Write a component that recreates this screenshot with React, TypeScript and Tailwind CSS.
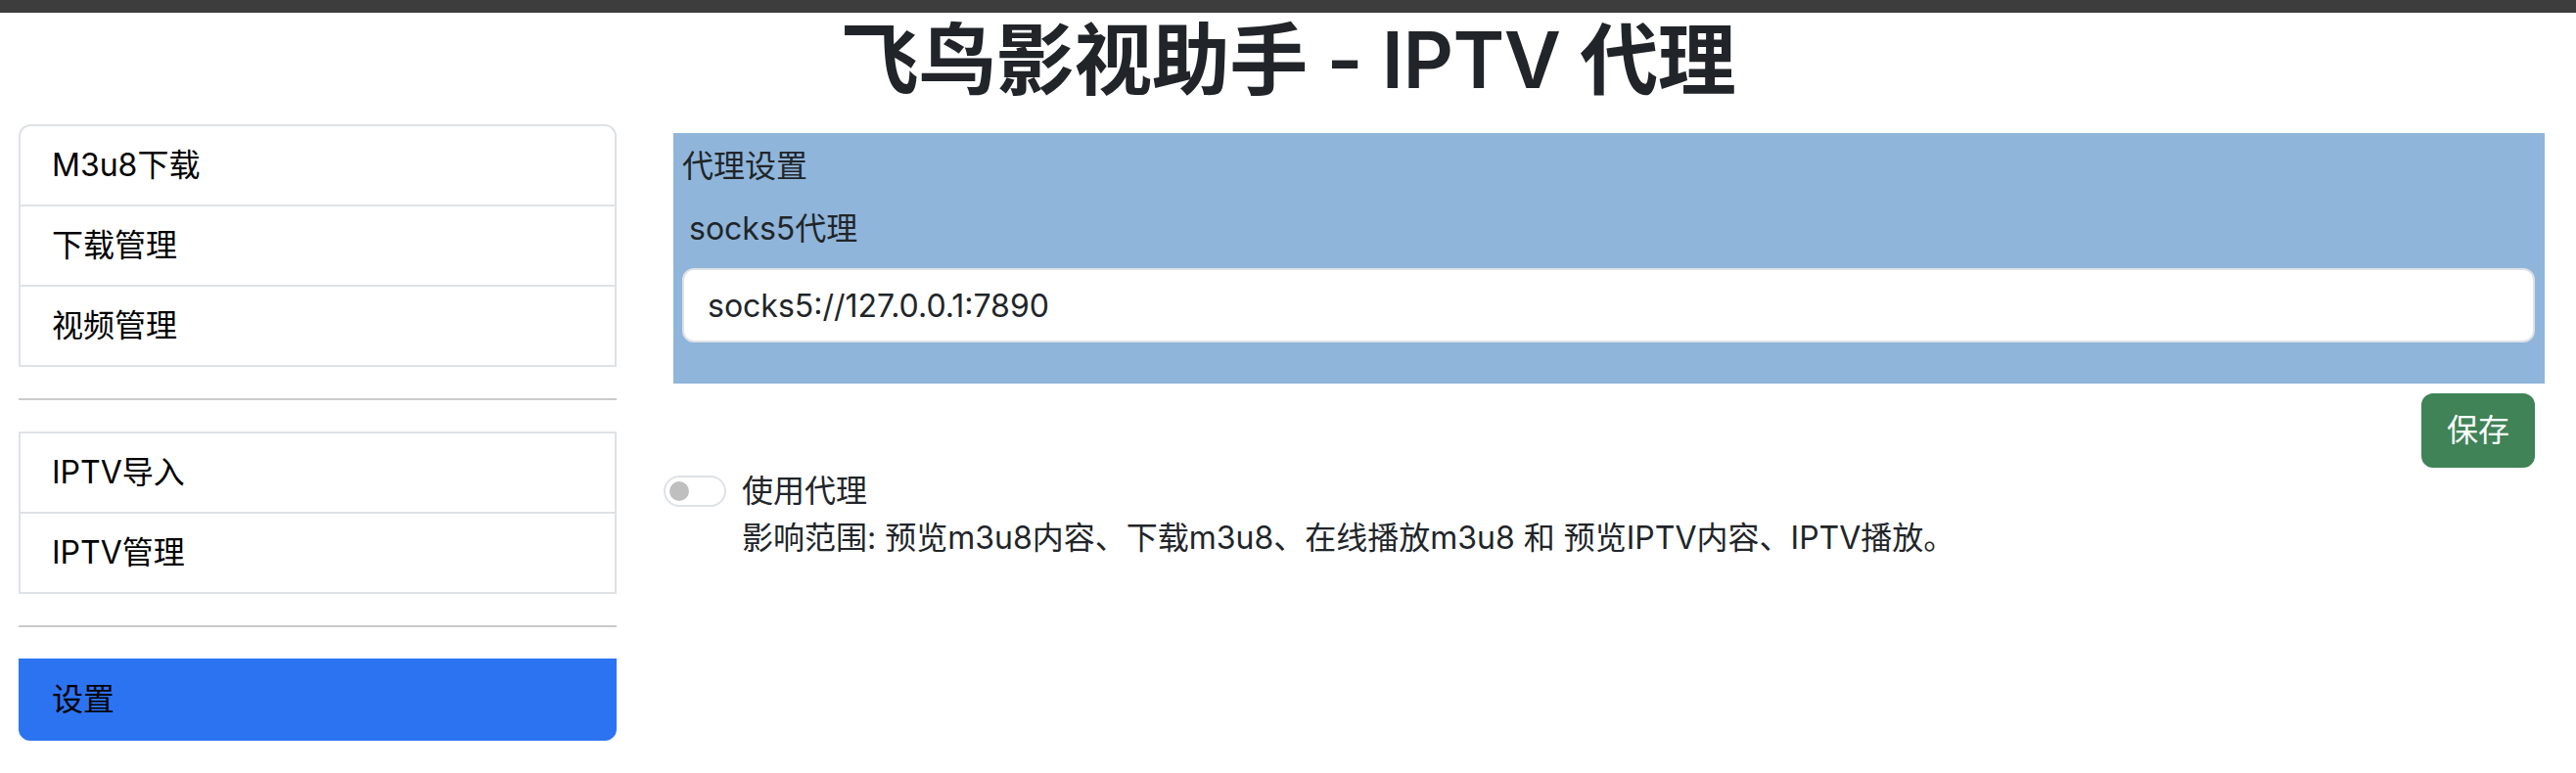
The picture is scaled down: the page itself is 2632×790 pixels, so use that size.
import { useState } from 'react';

const groups = [
  ['M3u8下载', '下载管理', '视频管理'],
  ['IPTV导入', 'IPTV管理'],
];

export default function App() {
  const [useProxy, setUseProxy] = useState(false);

  return (
    <div className="min-h-screen bg-white font-['Inter','Noto_Sans_CJK_SC',sans-serif] text-[#212529]">
      {/* window strip */}
      <div className="h-[13px] bg-[#3d3d3d]" />

      <h1 className="text-center text-[80px] font-semibold leading-[96px] tracking-[-0.5px] text-[#212529]">
        飞鸟影视助手 - IPTV 代理
      </h1>

      <div className="mt-[18px] flex pl-[19px]">
        {/* Sidebar */}
        <aside className="w-[611px] shrink-0 text-[32px] leading-[48px] text-black">
          {groups.map((items, gi) => (
            <div key={gi}>
              {items.map((item, i) => (
                <div
                  key={item}
                  className={`border-2 border-[#dee2e6] px-[32px] py-[16px] ${i > 0 ? 'border-t-0' : ''} ${gi === 0 && i === 0 ? 'rounded-t-[12px]' : ''}`}
                >
                  {item}
                </div>
              ))}
              <div className="my-[32px] h-[2px] bg-[#c9cacb]" />
            </div>
          ))}
          <div className="rounded-b-[12px] border-2 border-[#2c73f1] bg-[#2c73f1] px-[32px] py-[16px]">
            设置
          </div>
        </aside>

        {/* Content */}
        <main className="ml-[48px] w-[1932px] pt-[9px] text-[32px] leading-[48px]">
          <div className="ml-[10px] w-[1912px] bg-[#8fb5da] pb-[42px] pl-[9px] pr-[10px] pt-[10px]">
            <div>代理设置</div>
            <label className="ml-[7px] mt-[16px] block">socks5代理</label>
            <input
              readOnly
              defaultValue="socks5://127.0.0.1:7890"
              className="mt-[16px] block h-[76px] w-full rounded-[12px] border-2 border-[#dee2e6] bg-white px-[24px] text-[32px] leading-[48px] text-[#212529] outline-none"
            />
          </div>

          <div className="ml-[10px] flex w-[1912px] justify-end pr-[10px] pt-[10px]">
            <button className="rounded-[12px] border-2 border-[#3f8357] bg-[#3f8357] px-[24px] py-[12px] text-[32px] leading-[48px] text-white">
              保存
            </button>
          </div>

          <div className="flex">
            <button
              onClick={() => setUseProxy(!useProxy)}
              className={`mt-[8px] flex h-[32px] w-[64px] shrink-0 items-center rounded-full border-2 ${useProxy ? 'justify-end border-[#2c73f1] bg-[#2c73f1]' : 'border-[#dee2e6] bg-white'}`}
            >
              <span className={`mx-[4px] h-[20px] w-[20px] rounded-full ${useProxy ? 'bg-white' : 'bg-[#bfbfbf]'}`} />
            </button>
            <div className="ml-[16px]">
              <div>使用代理</div>
              <div>影响范围: 预览m3u8内容、下载m3u8、在线播放m3u8 和 预览IPTV内容、IPTV播放。</div>
            </div>
          </div>
        </main>
      </div>
    </div>
  );
}
